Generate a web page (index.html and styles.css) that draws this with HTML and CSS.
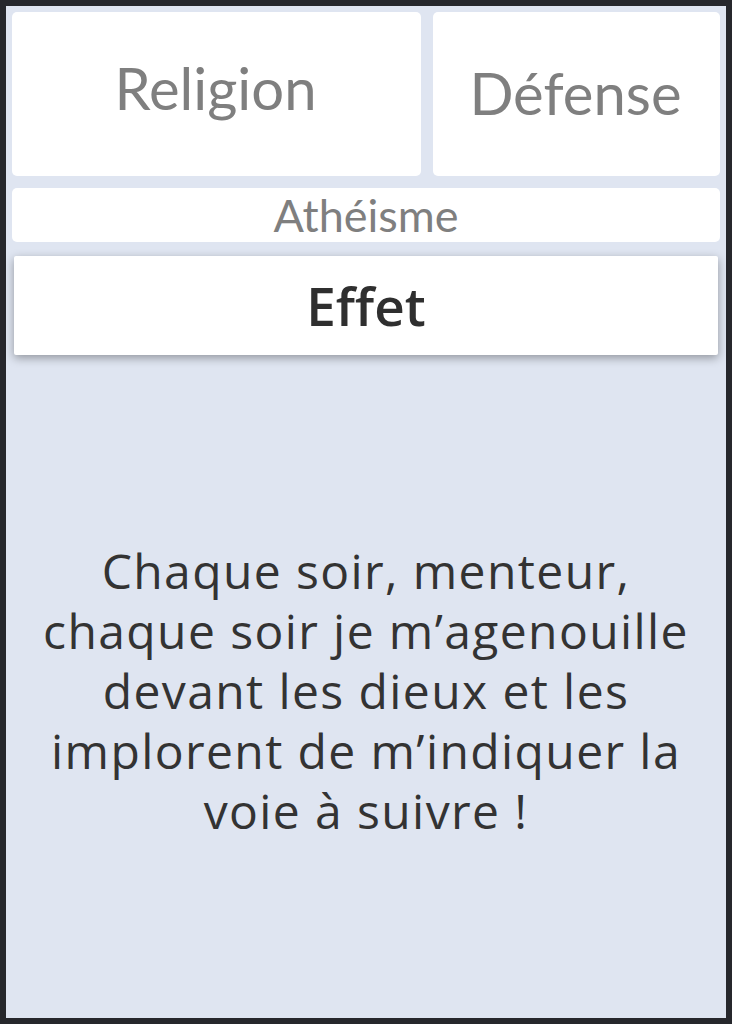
FILE: index.html
```html
<!DOCTYPE html>
<html lang="fr">
<head>
<meta charset="utf-8">
<title>Carte</title>
<link rel="stylesheet" href="styles.css">
</head>
<body>
<div class="frame">
  <div class="top-row">
    <div class="card tag-card"><span class="tag tag-religion">Religion</span></div>
    <div class="card tag-card"><span class="tag tag-defense">Défense</span></div>
  </div>
  <div class="card sub-card">Athéisme</div>
  <div class="effect-card">Effet</div>
  <div class="quote-area">
    <p class="quote">Chaque soir, menteur,<br>chaque soir je m’agenouille<br>devant les dieux et les<br>implorent de m’indiquer la<br>voie à suivre !</p>
  </div>
</div>
</body>
</html>
```

FILE: styles.css
```css
html, body {
  margin: 0;
  padding: 0;
  background: #26272c;
}
.frame {
  box-sizing: border-box;
  margin: 6px;
  width: 720px;
  height: 1012px;
  padding: 6px;
  background: #dfe5f1;
  display: flex;
  flex-direction: column;
}
.top-row {
  display: grid;
  grid-template-columns: 409px 287px;
  column-gap: 12px;
  height: 164px;
}
.card {
  background: #ffffff;
  border-radius: 5px;
}
.tag-card {
  display: flex;
  justify-content: center;
  align-items: center;
}
.tag {
  font-family: Lato, "Liberation Sans", sans-serif;
  font-size: 58px;
  color: #7f7f7f;
  line-height: 1;
}
.tag-religion { transform: translate(-1px, -6px); }
.tag-defense { transform: translate(-1px, -1px); }
.sub-card {
  margin-top: 12px;
  height: 54px;
  display: flex;
  justify-content: center;
  align-items: center;
  font-family: Lato, "Liberation Sans", sans-serif;
  font-size: 45px;
  color: #7f7f7f;
}
.effect-card {
  margin: 14px 2px 0;
  height: 99px;
  background: #ffffff;
  border-radius: 2px;
  box-shadow: 0 3px 10px rgba(0, 0, 0, 0.35);
  display: flex;
  justify-content: center;
  align-items: center;
  font-family: "Open Sans", "Noto Sans", sans-serif;
  font-weight: 600;
  font-size: 53px;
  color: #2f2f2f;
}
.quote-area {
  flex: 1;
  padding-top: 14px;
  display: flex;
  justify-content: center;
  align-items: center;
}
.quote {
  margin: 0;
  text-align: center;
  font-family: "Open Sans", "Noto Sans", sans-serif;
  font-size: 48px;
  letter-spacing: 1.4px;
  line-height: 60px;
  color: #333333;
  white-space: nowrap;
}
```
